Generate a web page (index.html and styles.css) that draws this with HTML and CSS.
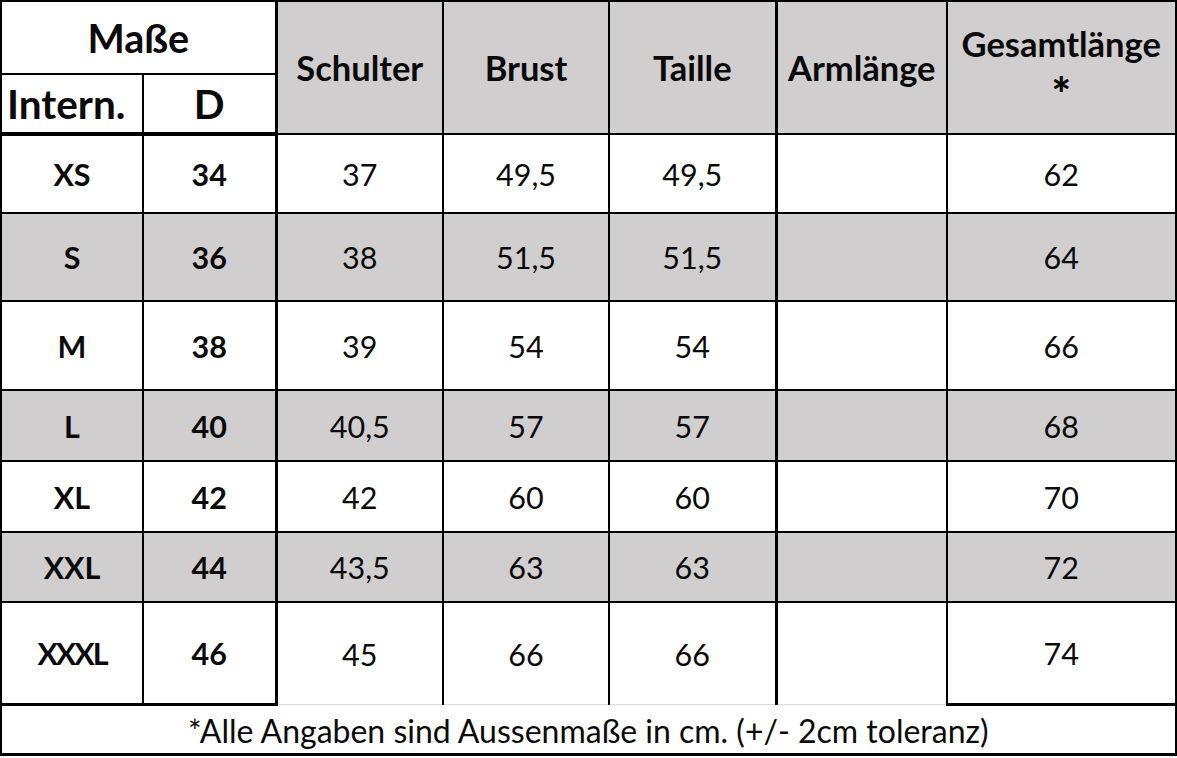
FILE: index.html
```html
<!DOCTYPE html>
<html lang="de">
<head>
<meta charset="utf-8">
<title>Maßtabelle</title>
<link rel="stylesheet" href="styles.css">
</head>
<body>
<table class="sizes">
  <colgroup>
    <col class="c-int">
    <col class="c-d">
    <col class="c-sch">
    <col class="c-bru">
    <col class="c-tai">
    <col class="c-arm">
    <col class="c-ges">
  </colgroup>
  <thead>
    <tr class="h1">
      <th colspan="2" class="masse b-d">Maße</th>
      <th rowspan="2" class="hd">Schulter</th>
      <th rowspan="2" class="hd">Brust</th>
      <th rowspan="2" class="hd b-t">Taille</th>
      <th rowspan="2" class="hd">Armlänge</th>
      <th rowspan="2" class="hd ges">Gesamtlänge<br><span class="star">*</span></th>
    </tr>
    <tr class="h2">
      <th class="sub intern">Intern.</th>
      <th class="sub b-d">D</th>
    </tr>
  </thead>
  <tbody>
    <tr class="r-xs">
      <td class="lbl">XS</td><td class="lbl b-d">34</td><td>37</td><td>49,5</td><td class="b-t">49,5</td><td></td><td>62</td>
    </tr>
    <tr class="r-s grey">
      <td class="lbl">S</td><td class="lbl b-d">36</td><td>38</td><td>51,5</td><td class="b-t">51,5</td><td></td><td>64</td>
    </tr>
    <tr class="r-m">
      <td class="lbl">M</td><td class="lbl b-d">38</td><td>39</td><td>54</td><td class="b-t">54</td><td></td><td>66</td>
    </tr>
    <tr class="r-l grey">
      <td class="lbl">L</td><td class="lbl b-d">40</td><td>40,5</td><td>57</td><td class="b-t">57</td><td></td><td>68</td>
    </tr>
    <tr class="r-xl">
      <td class="lbl">XL</td><td class="lbl b-d">42</td><td>42</td><td>60</td><td class="b-t">60</td><td></td><td>70</td>
    </tr>
    <tr class="r-xxl grey">
      <td class="lbl">XXL</td><td class="lbl b-d">44</td><td>43,5</td><td>63</td><td class="b-t">63</td><td></td><td>72</td>
    </tr>
    <tr class="r-xxxl last">
      <td class="lbl xxxl">XXXL</td><td class="lbl b-d">46</td><td class="open">45</td><td class="open">66</td><td class="open b-t">66</td><td class="open"></td><td>74</td>
    </tr>
    <tr class="foot">
      <td colspan="7">*Alle Angaben sind Aussenmaße in cm. (+/- 2cm toleranz)</td>
    </tr>
  </tbody>
</table>
</body>
</html>
```

FILE: styles.css
```css
html, body {
  margin: 0;
  padding: 0;
  background: #ffffff;
}

.sizes {
  border-collapse: collapse;
  table-layout: fixed;
  width: 1175px;
  font-family: Lato, "Open Sans", "Liberation Sans", sans-serif;
  color: #0a0a0a;
  border-top: 2px solid #000;
  border-left: 2px solid #000;
  border-right: 3px solid #000;
}

.c-int { width: 142px; }
.c-d   { width: 133px; }
.c-sch { width: 167px; }
.c-bru { width: 166px; }
.c-tai { width: 167px; }
.c-arm { width: 171px; }
.c-ges { width: 229px; }

.sizes th,
.sizes td {
  border: 2px solid #000;
  padding: 0;
  text-align: center;
  vertical-align: middle;
  overflow: hidden;
  white-space: nowrap;
}

.sizes th {
  font-weight: 700;
}

.h1 th { height: 71px; }
.h2 th { height: 57px; border-bottom-width: 4px; }

.masse {
  font-size: 39.5px;
  background: #ffffff;
}

.sub {
  font-size: 40.5px;
  background: #ffffff;
}

.sizes th.intern {
  text-align: left;
  padding-left: 0;
  text-indent: 5px;
}

.hd {
  background: #d0cece;
  font-size: 34.5px;
  border-bottom-width: 4px;
}

.ges {
  line-height: 44px;
  padding-top: 2px;
}

.star {
  display: inline-block;
  font-size: 46px;
  font-weight: 900;
  line-height: 40px;
  vertical-align: top;
  padding-top: 8px;
}

.b-d { border-right-width: 3px !important; }
.b-t { border-right-width: 3px !important; }

.sizes td {
  font-size: 30.5px;
  font-weight: 400;
}

.sizes td.lbl {
  font-weight: 700;
}

.sizes td.xxxl {
  letter-spacing: -2px;
}

.grey td { background: #d0cece; }

.r-xs td   { height: 76px; }
.r-s td    { height: 86px; }
.r-m td    { height: 87px; }
.r-l td    { height: 69px; }
.r-xl td   { height: 69px; }
.r-xxl td  { height: 68px; }
.r-xxxl td { height: 100px; border-bottom-width: 3px; }

.sizes td.open {
  border-bottom: 1px solid #d9d9d9;
}

.foot td {
  height: 45px;
  font-size: 32px;
  border-top: 1px solid #d9d9d9;
  border-bottom: 3px solid #000;
  border-left: 2px solid #000;
  border-right: 3px solid #000;
  line-height: 1;
  padding-top: 2px;
}
```
